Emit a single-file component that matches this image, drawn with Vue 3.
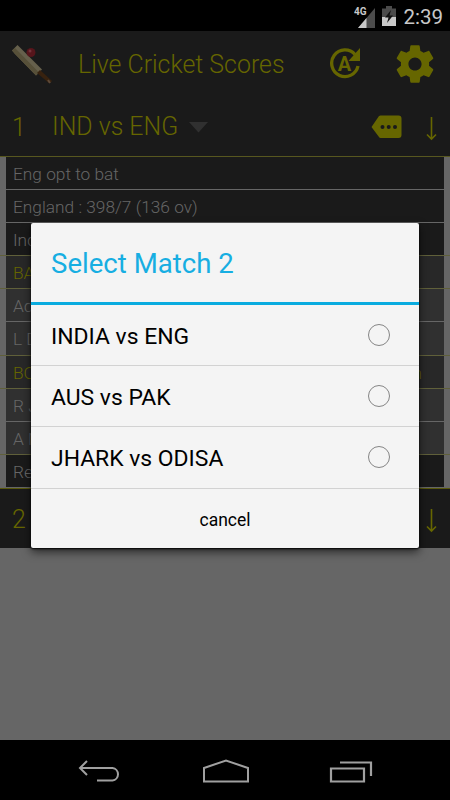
<template>
  <div class="screen">
    <div class="status-bar">
      <svg class="signal" width="22" height="24" viewBox="0 0 22 24">
        <path d="M21 4V24H4Z" fill="#4b4b4b" />
        <path d="M12.500 14V24H4Z" fill="#c8c8c8" />
        <text x="0" y="10.500" class="network">4G</text>
      </svg>
      <svg class="battery" width="14" height="20" viewBox="0 0 14 20">
        <path d="M0 2.500H4V0H10V2.500H14V11H0Z" fill="#4b4b4b" />
        <path d="M0 11H14V20H0Z" fill="#c8c8c8" />
        <path d="M9 4L3 11.500H6.500L5 17L11 9.500H7.500Z" fill="#111" />
      </svg>
      <span class="clock">2:39</span>
    </div>

    <header class="title-bar">
      <svg class="bat" width="42" height="42" viewBox="0 0 42 42">
        <path d="M1 7.500L6.500 2L31 26.500L25 32.500L4 11Z" fill="#66604c" />
        <path d="M1 7.500L4 5L28 29.500L25 32.500L4 11Z" fill="#575039" />
        <path d="M26 30L29 27L41 38L38.500 40.500Z" fill="#38220f" />
        <path d="M37 37L39 40" stroke="#5c4939" stroke-width="2" />
        <circle cx="20" cy="9.500" r="4.500" fill="#56151b" />
        <circle cx="19" cy="8" r="1.500" fill="#74323a" />
      </svg>
      <h1>Live Cricket Scores</h1>
      <svg class="refresh" width="32" height="32" viewBox="0 0 32 32">
        <path d="M25 6.500A13.300 13.300 0 1 0 28 18" fill="none" stroke="#666600" stroke-width="3.300" />
        <path d="M30 0V13H18.500Z" fill="#666600" />
        <text x="14.500" y="23" text-anchor="middle" class="auto">A</text>
      </svg>
      <svg class="gear" width="38" height="38" viewBox="2.1 1.9 19.8 20.2">
        <path
          fill="#666600"
          d="M19.43 12.98c.04-.32.07-.64.07-.98s-.03-.66-.07-.98l2.11-1.65c.19-.15.24-.42.12-.64l-2-3.46c-.12-.22-.39-.3-.61-.22l-2.49 1c-.52-.4-1.08-.73-1.69-.98l-.38-2.65C14.46 2.18 14.25 2 14 2h-4c-.25 0-.46.18-.49.42l-.38 2.65c-.61.25-1.17.59-1.69.98l-2.49-1c-.23-.09-.49 0-.61.22l-2 3.46c-.13.22-.07.49.12.64l2.11 1.65c-.04.32-.07.65-.07.98s.03.66.07.98l-2.11 1.65c-.19.15-.24.42-.12.64l2 3.46c.12.22.39.3.61.22l2.49-1c.52.4 1.08.73 1.69.98l.38 2.65c.03.24.24.42.49.42h4c.25 0 .46-.18.49-.42l.38-2.65c.61-.25 1.17-.59 1.69-.98l2.49 1c.23.09.49 0 .61-.22l2-3.46c.12-.22.07-.49-.12-.64l-2.11-1.65zM12 15.5c-1.93 0-3.5-1.57-3.5-3.5s1.57-3.5 3.5-3.5 3.5 1.57 3.5 3.5-1.57 3.5-3.5 3.5z"
        />
      </svg>
    </header>

    <section class="match-bar">
      <span class="number">1</span>
      <span class="match">IND vs ENG</span>
      <svg class="caret" width="19" height="11" viewBox="0 0 19 11">
        <path d="M0 0H19L9.500 10.500Z" fill="#303030" />
      </svg>
      <svg class="more" width="31" height="24" viewBox="0 0 31 24">
        <path d="M8 1Q8.800 .5 9.500 .5H27.500Q30.500 .5 30.500 3.500V20Q30.500 23 27.500 23H9.500Q8.500 23 8 22L.5 12Z" fill="#666600" />
        <g fill="#1a1a1a">
          <circle cx="11.500" cy="12" r="2" />
          <circle cx="17.700" cy="12" r="2" />
          <circle cx="24" cy="12" r="2" />
        </g>
      </svg>
      <svg class="arrow" width="11" height="24" viewBox="0 0 11 24">
        <path d="M5.500 0V22M1 17.500L5.500 22L10 17.500" fill="none" stroke="#666600" stroke-width="1.600" />
      </svg>
    </section>

    <div class="scores">
      <div v-for="(row, i) in rows" :key="i" class="line" :class="row.line">
        <div class="row" :class="row.type">
          <span>{{ row.text }}</span>
          <span v-if="row.right">{{ row.right }}</span>
        </div>
      </div>
    </div>

    <section class="match-bar second">
      <span class="number">2</span>
      <svg class="arrow" width="11" height="24" viewBox="0 0 11 24">
        <path d="M5.500 0V22M1 17.500L5.500 22L10 17.500" fill="none" stroke="#666600" stroke-width="1.600" />
      </svg>
    </section>

    <div class="blank"></div>

    <nav class="nav-bar">
      <svg width="44" height="26" viewBox="0 0 44 26">
        <path d="M3 9H34.500A6.300 6.300 0 0 1 34.500 21.500H19M9 2L2 9L9 16" fill="none" stroke="#a0a0a0" stroke-width="2" />
      </svg>
      <svg width="46" height="26" viewBox="0 0 46 26">
        <path d="M1 22.500V9L23 1.500L45 9V22.500Z" fill="none" stroke="#a0a0a0" stroke-width="2" />
      </svg>
      <svg width="44" height="26" viewBox="0 0 44 26">
        <path d="M2 9.500H35V22.500H2ZM11 3.500H42V17" fill="none" stroke="#a0a0a0" stroke-width="2.200" />
      </svg>
    </nav>

    <div class="dialog">
      <h2>Select Match 2</h2>
      <div
        v-for="name in matches"
        :key="name"
        class="option"
        @click="selected = name"
      >
        <span>{{ name }}</span>
        <span class="radio" :class="{ checked: selected === name }"></span>
      </div>
      <button class="cancel" @click="selected = ''">cancel</button>
    </div>
  </div>
</template>

<script setup>
import { ref } from 'vue';

const selected = ref('');
const matches = ['INDIA vs ENG', 'AUS vs PAK', 'JHARK vs ODISA'];

// line is the colour of the divider under the row
const rows = [
  { text: 'Eng opt to bat', type: 'info', line: 'grey' },
  { text: 'England : 398/7 (136 ov)', type: 'info', line: 'grey' },
  { text: 'Ind', type: 'info', line: 'yellow' },
  { text: 'BA', type: 'head', line: 'yellow' },
  { text: 'Ad', type: 'player', line: 'grey' },
  { text: 'L D', type: 'player', line: 'yellow' },
  { text: 'BO', right: 'n', type: 'head', line: 'yellow' },
  { text: 'R J', type: 'player', line: 'grey' },
  { text: 'A N', type: 'player', line: 'yellow' },
  { text: 'Re', type: 'info', line: 'none' },
];
</script>

<style>
body {
  background: #666;
}
</style>

<style scoped>
.screen {
  position: relative;
  display: flex;
  flex-direction: column;
  width: 450px;
  height: 800px;
  overflow: hidden;
  background: #666;
  font-family: Roboto, sans-serif;
  font-weight: 300;
}

svg {
  display: block;
  flex: none;
}

h1,
h2 {
  margin: 0;
  font-weight: 300;
}

.status-bar {
  display: flex;
  align-items: center;
  justify-content: flex-end;
  box-sizing: border-box;
  height: 31px;
  padding-right: 7px;
  background: #000;
}

.network {
  font-size: 10px;
  font-weight: 700;
  fill: #c8c8c8;
}

.signal {
  margin-right: 6px;
}

.battery {
  margin-right: 7px;
}

.clock {
  color: #c8c8c8;
  font-size: 20.5px;
  font-weight: 400;
  line-height: 31px;
  padding-top: 3px;
}

.title-bar {
  display: flex;
  align-items: center;
  height: 66px;
  padding-left: 11px;
  background: #1a1a1a;
  color: #666600;
}

.bat {
  margin-right: 25px;
}

h1 {
  width: 251px;
  font-size: 24.9px;
  line-height: 66px;
  white-space: nowrap;
  padding-top: 2px;
}

.refresh {
  margin: 0 34px 0 1px;
}

.auto {
  font-size: 20px;
  font-weight: 700;
  fill: #666600;
}

.match-bar {
  display: flex;
  align-items: center;
  box-sizing: border-box;
  height: 60px;
  padding: 0 13px 0 12px;
  border-bottom: 1px solid #57571f;
  background: #1a1a1a;
  color: #666600;
  font-size: 24.9px;
}

.number {
  width: 40px;
  padding-top: 2px;
}

.caret {
  margin: 2px 0 0 11px;
}

.more {
  margin-left: auto;
  margin-right: 24px;
}

.arrow {
  margin-top: 5px;
}

.line {
  box-sizing: border-box;
  height: 33.1px;
  padding: 0 6px;
  border-bottom: 1px solid transparent;
}

.line.yellow {
  border-color: #60603a;
}

.row {
  display: flex;
  justify-content: space-between;
  box-sizing: border-box;
  height: 100%;
  padding: 0 22px 0 7px;
  color: #666;
  font-size: 17.3px;
  line-height: 35px;
  white-space: nowrap;
}

.row.info {
  background: #1a1a1a;
}

.row.head {
  background: #282828;
  color: #666600;
}

.row.player {
  background: #303030;
}

.line.grey .row {
  height: 33px;
  border-bottom: 1px solid #666;
}

.second {
  border-top: 1px solid #57570a;
  border-bottom: 0;
}

.second .arrow {
  margin-left: auto;
}

.blank {
  flex: 1;
}

.nav-bar {
  display: flex;
  justify-content: space-between;
  align-items: center;
  box-sizing: border-box;
  height: 60px;
  padding: 3px 77px 0 78px;
  background: #000;
}

.dialog {
  position: absolute;
  top: 223px;
  left: 31px;
  display: flex;
  flex-direction: column;
  width: 388px;
  height: 325px;
  border-radius: 2px;
  background: #f4f4f4;
  box-shadow: 0 1px 2px #000, 0 4px 10px rgba(0, 0, 0, 0.6);
  color: #000;
  font-weight: 400;
}

h2 {
  box-sizing: border-box;
  height: 82px;
  padding-left: 20px;
  border-bottom: 3px solid #09abdf;
  color: #17aee2;
  font-size: 27.6px;
  font-weight: 400;
  line-height: 82px;
}

.option {
  display: flex;
  align-items: center;
  justify-content: space-between;
  box-sizing: border-box;
  height: 61.2px;
  padding: 0 29px 0 20px;
  border-bottom: 1px solid #d2d2d2;
  font-size: 22.9px;
}

.option span:first-child {
  padding-top: 2px;
}

.radio {
  box-sizing: border-box;
  width: 22px;
  height: 22px;
  border: 1px solid #858585;
  border-radius: 50%;
}

.radio.checked {
  border: 6px solid #09abdf;
}

.cancel {
  flex: 1;
  padding: 3px 0 0;
  border: 0;
  background: none;
  color: #000;
  font-family: inherit;
  font-size: 17.5px;
}
</style>
